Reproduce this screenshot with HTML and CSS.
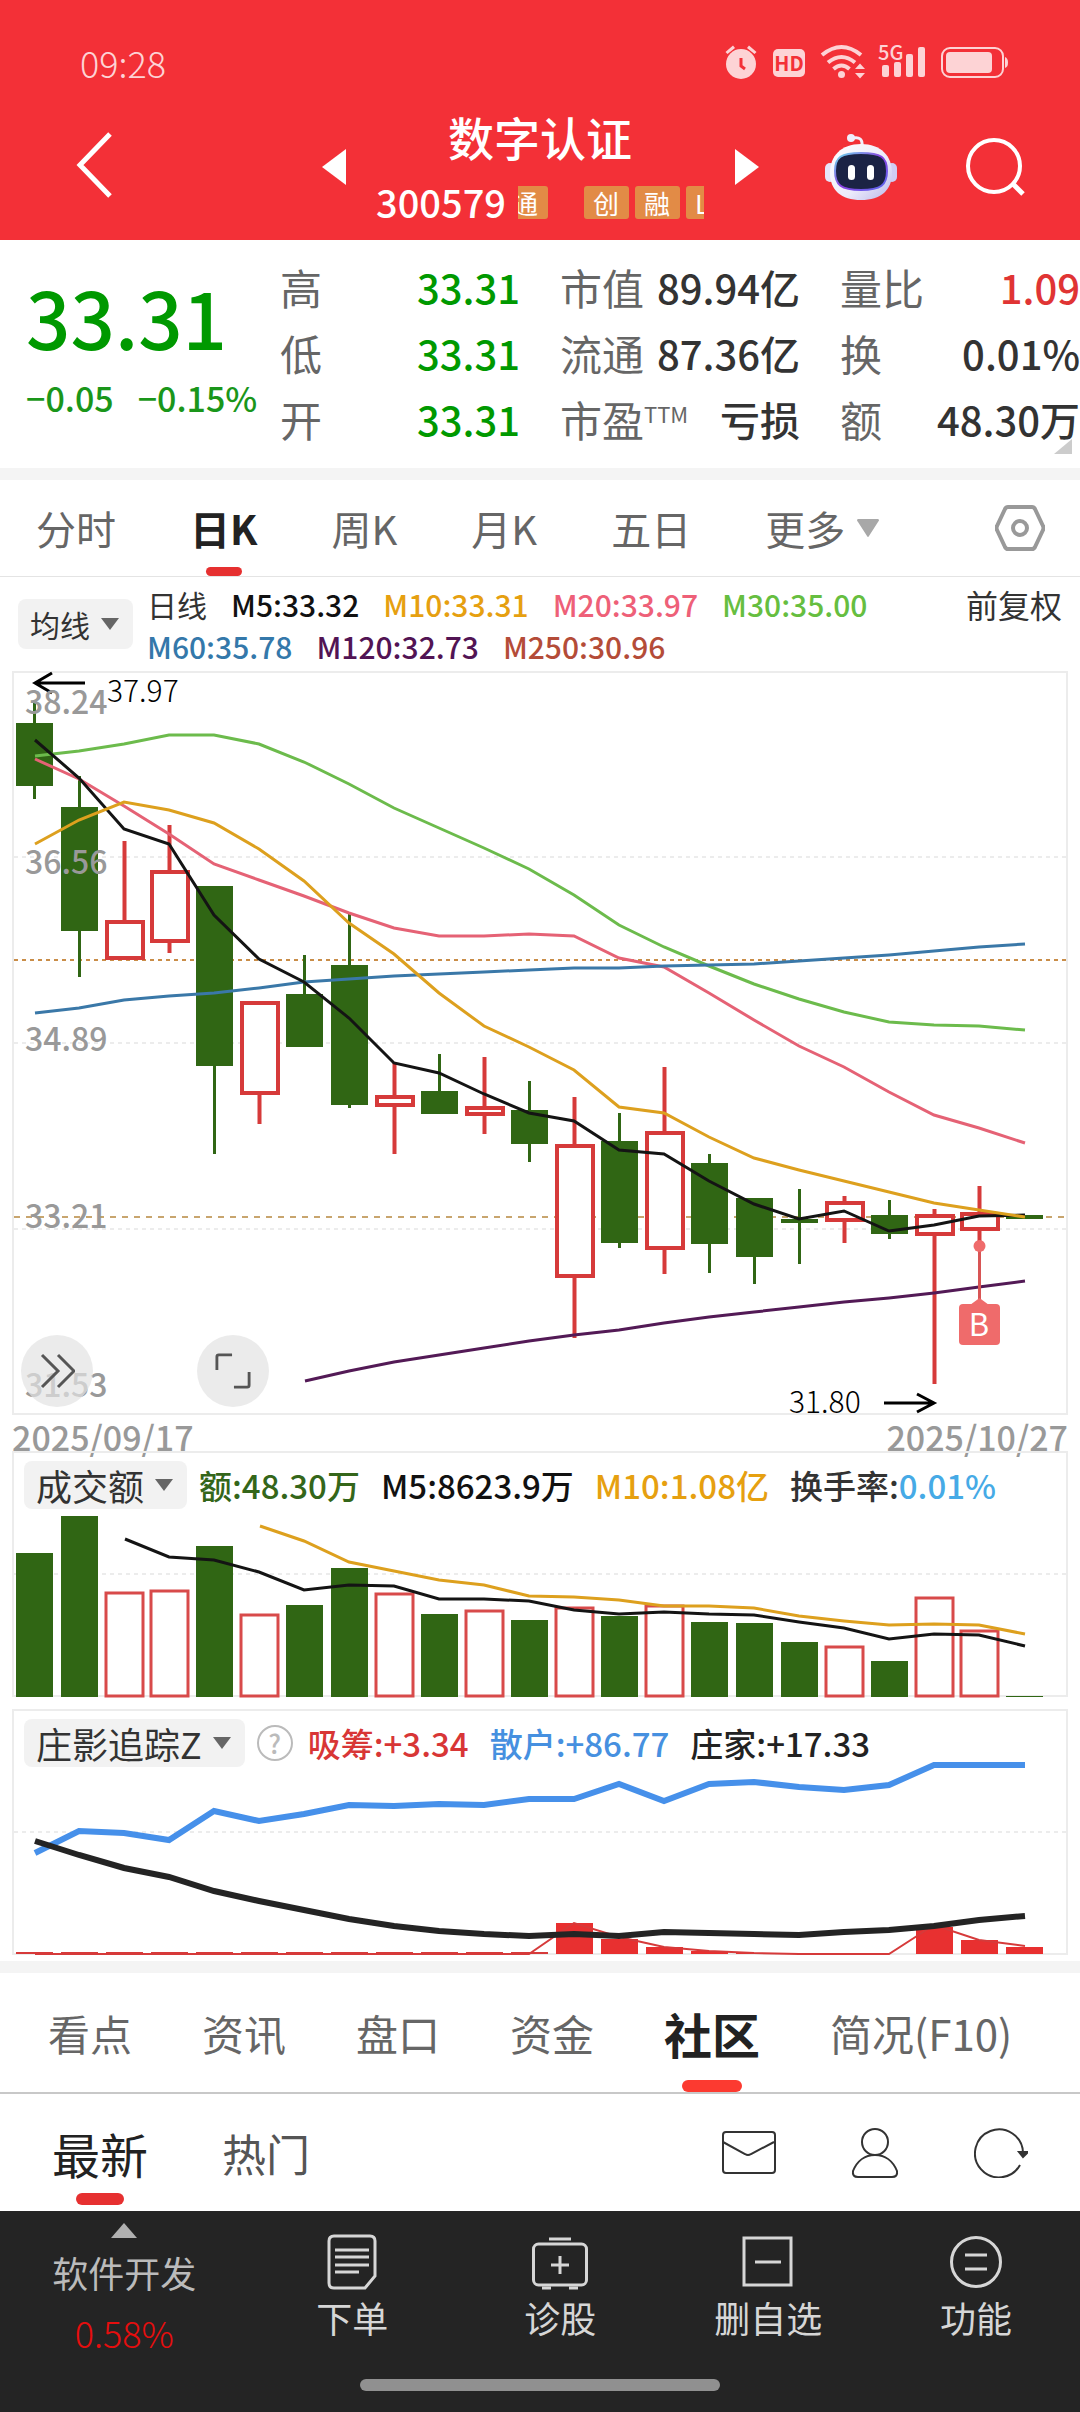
FILE: index.html
```html
<!DOCTYPE html>
<html lang="zh-CN">
<head>
<meta charset="utf-8">
<meta name="viewport" content="width=device-width, initial-scale=1">
<title>数字认证 300579</title>
<link rel="stylesheet" href="styles.css">
</head>
<body>
<header class="top">
  <div class="status">
    <time>09:28</time>
    <svg class="status-icons" viewBox="724 40 288 44" role="img" aria-label="闹钟 HD Wi-Fi 5G 电池">
      <g fill="#fdd3d5">
        <circle cx="741" cy="64" r="15"/>
        <path d="M725.500 52l7.500-6.500 2 2.500-7.500 6zM756.500 52l-7.500-6.500-2 2.500 7.500 6z"/>
        <rect x="773" y="49" width="32" height="28" rx="5"/>
        <circle cx="841.500" cy="74.500" r="3.500"/>
        <path d="M855 69l5-5.500 5 5.500zM855 73l5 5.500 5-5.500z"/>
        <rect x="882" y="65" width="7" height="12" rx="2"/>
        <rect x="894" y="62" width="7" height="15" rx="2"/>
        <rect x="906" y="54" width="7" height="23" rx="2"/>
        <rect x="918" y="47" width="7" height="30" rx="2"/>
        <rect x="946" y="52" width="46" height="21" rx="4"/>
        <path d="M1005 57q3 1 3 5.500t-3 5.500z"/>
      </g>
      <g fill="none" stroke="#fdd3d5" stroke-width="4">
        <path d="M822 55q19.500-16 39 0"/>
        <path d="M828 62.500q13.500-11 27 0"/>
        <path d="M833.500 69q8-7 16 0"/>
        <rect x="942" y="48" width="61" height="29" rx="8" stroke-width="2"/>
      </g>
      <path d="M741 58v8l4 3" fill="none" stroke="#f33037" stroke-width="3"/>
      <text class="hd-text" x="789" y="71" text-anchor="middle">HD</text>
      <text class="net-text" x="878" y="60">5G</text>
    </svg>
  </div>
  <nav class="title-bar" aria-label="个股">
    <div class="bar-left">
      <button class="icon-btn" aria-label="返回">
        <svg class="i-back" viewBox="0 0 36 66" fill="none" stroke="#fff" stroke-width="5"><path d="M34 2L4 33l30 31"/></svg>
      </button>
    </div>
    <div class="bar-center">
      <button class="icon-btn" aria-label="上一只"><svg class="i-step" viewBox="0 0 24 36" fill="#fff"><path d="M24 0v36L0 18z"/></svg></button>
      <div class="stock">
        <h1>数字认证</h1>
        <div class="stock-sub">
          <span class="code">300579</span>
          <div class="tags"><span class="tag tag-lead">通</span><span class="tag">创</span><span class="tag">融</span><span class="tag">L</span></div>
        </div>
      </div>
      <button class="icon-btn" aria-label="下一只"><svg class="i-step" viewBox="0 0 24 36" fill="#fff"><path d="M0 0v36l24-18z"/></svg></button>
    </div>
    <div class="bar-right">
      <button class="icon-btn" aria-label="智能助手">
        <svg class="i-bot" viewBox="0 0 72 66">
          <defs>
            <linearGradient id="shell" x1="0" y1="0" x2="1" y2="1"><stop offset="0" stop-color="#fff"/><stop offset=".6" stop-color="#ecebfb"/><stop offset="1" stop-color="#b9b6ea"/></linearGradient>
            <linearGradient id="rim" x1="0" y1="0" x2="1" y2="1"><stop offset="0" stop-color="#6fe0ee"/><stop offset=".5" stop-color="#8a3fe0"/><stop offset="1" stop-color="#5a6cf0"/></linearGradient>
          </defs>
          <path d="M28 4q10-2 9 8" fill="none" stroke="#f2f0fc" stroke-width="3"/>
          <circle cx="26" cy="4" r="4" fill="#efeefc"/>
          <rect x="0" y="29" width="10" height="19" rx="5" fill="#e6e4fa"/>
          <rect x="62" y="29" width="10" height="19" rx="5" fill="#d0cdf3"/>
          <path d="M36 10c20 0 31 12 31 29S56 66 36 66 5 56 5 39s11-29 31-29z" fill="url(#shell)"/>
          <path d="M36 19c20 0 26 4 26 18s-6 19-26 19S10 51 10 37s6-18 26-18z" fill="#1b2345" stroke="url(#rim)" stroke-width="2"/>
          <rect x="23" y="31" width="7" height="15" rx="3.500" fill="#fff"/><rect x="42" y="31" width="7" height="15" rx="3.500" fill="#fff"/>
        </svg>
      </button>
      <button class="icon-btn" aria-label="搜索">
        <svg class="i-search" viewBox="0 0 60 60" fill="none" stroke="#fff" stroke-width="4"><circle cx="29" cy="29" r="26"/><path d="M47 46l11 11" stroke-width="5"/></svg>
      </button>
    </div>
  </nav>
</header>

<main>
  <section class="quote" aria-label="行情">
    <div class="price-box">
      <strong class="price">33.31</strong>
      <div class="change"><span>−0.05</span><span>−0.15%</span></div>
    </div>
    <dl class="stats">
      <div><dt>高</dt><dd class="down">33.31</dd></div>
      <div><dt>低</dt><dd class="down">33.31</dd></div>
      <div><dt>开</dt><dd class="down">33.31</dd></div>
    </dl>
    <dl class="stats">
      <div><dt>市值</dt><dd>89.94亿</dd></div>
      <div><dt>流通</dt><dd>87.36亿</dd></div>
      <div><dt>市盈<sup>TTM</sup></dt><dd>亏损</dd></div>
    </dl>
    <dl class="stats">
      <div><dt>量比</dt><dd class="up">1.09</dd></div>
      <div><dt>换</dt><dd>0.01%</dd></div>
      <div><dt>额</dt><dd>48.30万</dd></div>
    </dl>
    <span class="expand"></span>
  </section>

  <nav class="period" aria-label="周期">
    <a href="#">分时</a>
    <a href="#" class="on">日K</a>
    <a href="#">周K</a>
    <a href="#">月K</a>
    <a href="#">五日</a>
    <a href="#" class="more">更多<svg class="i-caret-l" viewBox="0 0 22 18" fill="#a8a8a8"><path d="M1 0h20q2 1 0 3L12 17q-1 2-2 0L1 3Q-1 1 1 0z"/></svg></a>
    <button class="icon-btn gear" aria-label="设置">
      <svg class="i-gear" viewBox="0 0 50 46" fill="none" stroke="#999" stroke-width="4"><path d="M13 2h24q2 0 3 2l8 17q1 2 0 4l-8 17q-1 2-3 2H13q-2 0-3-2L2 25q-1-2 0-4l8-17q1-2 3-2z"/><circle cx="25" cy="23" r="7"/></svg>
    </button>
  </nav>

  <section class="ma-row" aria-label="均线">
    <button class="chip chip-s">均线<svg class="i-caret" viewBox="0 0 18 12" fill="#666"><path d="M0 0h18L9 12z"/></svg></button>
    <div class="ma-list">
      <span>日线</span><span class="c-5">M5:33.32</span><span class="c-10">M10:33.31</span><span class="c-20">M20:33.97</span><span class="c-30">M30:35.00</span>
      <span class="c-60">M60:35.78</span><span class="c-120">M120:32.73</span><span class="c-250">M250:30.96</span>
    </div>
    <button class="adjust">前复权</button>
  </section>

  <section class="panel kline" aria-label="日K线">
    <svg class="chart" viewBox="14 673 1052 740">
      <g class="grid"><path d="M14 857H1066M14 1043H1066M14 1229H1066"/></g>
      <path d="M14 960H1066" stroke="#c98d48" stroke-width="2" stroke-dasharray="4 4"/>
      <path d="M14 1217H1066" stroke="#c8a56e" stroke-width="2" stroke-dasharray="6 6"/>
      <path class="wick-g" d="M34.500 703V799M79.500 776V977M214.500 1000V1154M304.500 955V1000M349.500 913V1108M439.500 1054V1100M529.500 1081V1162M619.500 1113V1248M709.500 1154V1273M754.500 1200V1284M799.500 1189V1264M889.500 1200V1239"/>
      <path class="body-g" d="M16 723h37v63h-37zM61 807h37v124h-37zM196 886h37v180h-37zM286 994h37v53h-37zM331 965h37v140h-37zM421 1091h37v23h-37zM511 1110h37v34h-37zM601 1141h37v102h-37zM691 1163h37v81h-37zM736 1198h37v59h-37zM781 1219h37v4h-37zM871 1215h37v19h-37zM1006 1215h37v4h-37z"/>
      <path class="wick-r" d="M124.500 841V920M169.500 825V870M169.500 942V953M259.500 1094V1124M394.500 1063V1095M394.500 1106V1154M484.500 1057V1106M484.500 1115V1134M574.500 1097V1144M574.500 1277V1338M664.500 1067V1131M664.500 1249V1274M844.500 1196V1201M844.500 1221V1243M934.500 1209V1214M934.500 1235V1384M979.500 1186V1212M979.500 1230V1247"/>
      <path class="body-r" d="M107 922h36v36h-36zM152 872h36v69h-36zM242 1003h36v90h-36zM377 1097h36v8h-36zM467 1108h36v6h-36zM557 1146h36v130h-36zM647 1133h36v115h-36zM827 1203h36v17h-36zM917 1216h36v18h-36zM962 1214h36v15h-36z"/>
      <g class="ma-line">
        <polyline stroke="#6cbb4c" points="35,756 79,751 124,744 169,735 214,735 259,744 304,762 349,784 394,808 439,828 484,848 529,869 574,895 619,925 664,947 709,966 754,984 799,999 844,1012 889,1022 934,1025 979,1026 1025,1030"/>
        <polyline stroke="#e56275" points="35,759 79,779 124,806 169,834 214,864 259,880 304,896 349,913 394,928 439,936 484,936 529,934 574,936 619,958 664,967 709,993 754,1020 799,1046 844,1067 889,1092 934,1115 979,1128 1025,1143"/>
        <polyline stroke="#3a78a8" points="35,1013 79,1008 124,1000 169,996 214,993 259,988 304,982 349,979 394,976 439,974 484,972 529,970 574,968 619,968 664,966 709,965 754,964 799,961 844,958 889,955 934,951 979,947 1025,944"/>
        <polyline stroke="#531a56" points="305,1381 349,1371 394,1362 439,1355 484,1348 529,1341 574,1335 619,1330 664,1323 709,1317 754,1312 799,1307 844,1302 889,1298 934,1293 979,1287 1025,1281"/>
        <polyline stroke="#141414" points="35,740 79,778 124,829 169,844 214,915 259,959 304,982 349,1018 394,1063 439,1073 484,1094 529,1113 574,1121 619,1150 664,1154 709,1181 754,1204 799,1219 844,1211 889,1231 934,1225 979,1216 1025,1215"/>
        <polyline stroke="#dda01e" points="35,844 79,820 124,802 169,810 214,823 259,849 304,881 349,923 394,954 439,993 484,1026 529,1047 574,1070 619,1107 664,1113 709,1137 754,1158 799,1170 844,1181 889,1192 934,1203 979,1210 1025,1217"/>
      </g>
      <g class="arrow"><path d="M85 683H35M52 673L35 683l17 10"/><path d="M884 1403H934M917 1394l17 9-17 9"/></g>
      <path d="M979.500 1246V1300" stroke="#d85555" stroke-width="3"/>
      <circle cx="979.500" cy="1246" r="6" fill="#ef6b6b"/>
      <path d="M970 1305l9.500-7 9.500 7z" fill="#ef6b6b"/>
      <rect x="959" y="1304" width="41" height="41" rx="4" fill="#ef6b6b"/>
      <text class="mark" x="979" y="1336" text-anchor="middle">B</text>
      <g class="axis"><text x="25" y="714">38.24</text><text x="25" y="874">36.56</text><text x="25" y="1051">34.89</text><text x="25" y="1228">33.21</text><text x="25" y="1397">31.53</text></g>
      <g class="extreme"><text x="107" y="702">37.97</text><text x="789" y="1413">31.80</text></g>
    </svg>
    <div class="float-tools">
      <button class="round" aria-label="收起"><svg viewBox="0 0 36 36" fill="none" stroke="#555" stroke-width="3"><path d="M3 2l16 16L3 34M19 2l16 16-16 16"/></svg></button>
      <button class="round" aria-label="全屏"><svg viewBox="0 0 38 38" fill="none" stroke="#555" stroke-width="3"><path d="M2 18V4q0-2 2-2h14M36 20v14q0 2-2 2H20"/></svg></button>
    </div>
  </section>
  <div class="dates"><time>2025/09/17</time><time>2025/10/27</time></div>

  <section class="panel" aria-label="成交额">
    <div class="panel-head">
      <button class="chip">成交额<svg class="i-caret" viewBox="0 0 18 12" fill="#666"><path d="M0 0h18L9 12z"/></svg></button>
      <span class="c-vol">额:48.30万</span><span class="c-5">M5:8623.9万</span><span class="c-10">M10:1.08亿</span><span>换手率:<b class="c-rate">0.01%</b></span>
    </div>
    <svg class="chart" viewBox="14 1515 1052 180">
      <g class="grid"><path d="M14 1574H1066"/></g>
      <path class="body-g" d="M16 1553h37v144h-37zM61 1516h37v181h-37zM196 1546h37v151h-37zM286 1605h37v92h-37zM331 1568h37v129h-37zM421 1614h37v83h-37zM511 1620h37v77h-37zM601 1616h37v81h-37zM691 1622h37v75h-37zM736 1623h37v74h-37zM781 1642h37v55h-37zM871 1661h37v36h-37zM1006 1696h37v1h-37z"/>
      <path class="bar-r" d="M106 1593h37v103h-37zM151 1591h37v105h-37zM241 1615h37v81h-37zM376 1594h37v102h-37zM466 1611h37v85h-37zM556 1608h37v88h-37zM646 1606h37v90h-37zM826 1647h37v49h-37zM916 1598h37v98h-37zM961 1631h37v65h-37z"/>
      <g class="ma-line">
        <polyline stroke="#141414" points="125,1539 169,1557 214,1560 259,1572 304,1590 349,1585 394,1586 439,1599 484,1599 529,1601 574,1610 619,1614 664,1612 709,1614 754,1615 799,1622 844,1628 889,1639 934,1634 979,1635 1025,1646"/>
        <polyline stroke="#dda01e" points="260,1526 304,1541 349,1562 394,1571 439,1580 484,1585 529,1596 574,1597 619,1600 664,1606 709,1606 754,1608 799,1616 844,1621 889,1625 934,1624 979,1625 1025,1634"/>
      </g>
    </svg>
  </section>

  <section class="panel" aria-label="庄影追踪">
    <div class="panel-head">
      <button class="chip">庄影追踪Z<svg class="i-caret" viewBox="0 0 18 12" fill="#666"><path d="M0 0h18L9 12z"/></svg></button>
      <button class="help" aria-label="说明">?</button>
      <span class="c-red">吸筹:+3.34</span><span class="c-blue">散户:+86.77</span><span class="c-ink">庄家:+17.33</span>
    </div>
    <svg class="chart" viewBox="14 1773 1052 180">
      <g class="grid"><path d="M14 1832H1066"/></g>
      <path d="M16 1953H548" stroke="#d63a3a" stroke-width="2" stroke-dasharray="37 8"/>
      <path fill="#e83030" d="M556 1923h37v31h-37zM601 1939h37v15h-37zM646 1947h37v7h-37zM691 1951h37v3h-37zM736 1953h37v1h-37zM916 1927h37v27h-37zM961 1940h37v14h-37zM1006 1947h37v7h-37z"/>
      <polyline fill="none" stroke="#d63a3a" stroke-width="2" points="35,1954 529,1954 574,1923 619,1937 664,1947 709,1951 754,1953 799,1954 889,1954 934,1925 979,1940 1025,1946"/>
      <polyline fill="none" stroke="#4690ea" stroke-width="6" points="35,1853 79,1831 124,1833 169,1840 214,1811 259,1821 304,1814 349,1805 394,1806 439,1804 484,1805 529,1799 574,1799 619,1784 664,1801 709,1784 754,1782 799,1787 844,1790 889,1785 934,1765 1025,1765"/>
      <polyline fill="none" stroke="#242424" stroke-width="6" points="35,1841 79,1855 124,1868 169,1877 214,1891 259,1901 304,1910 349,1919 394,1926 439,1931 484,1934 529,1936 574,1934 619,1936 664,1932 709,1933 754,1934 799,1935 844,1932 889,1930 934,1926 979,1920 1025,1916"/>
    </svg>
  </section>

  <nav class="sections" aria-label="栏目">
    <a href="#">看点</a><a href="#">资讯</a><a href="#">盘口</a><a href="#">资金</a><a href="#" class="on">社区</a><a href="#">简况(F10)</a>
  </nav>

  <nav class="feed" aria-label="社区">
    <a href="#" class="on">最新</a><a href="#">热门</a>
    <div class="feed-tools">
      <button class="icon-btn" aria-label="消息"><svg class="i-feed" viewBox="0 0 54 50" fill="none" stroke="#333" stroke-width="2"><rect x="1" y="4" width="52" height="41" rx="3"/><path d="M1 14l22 12q3 2 6 0l23-12"/></svg></button>
      <button class="icon-btn" aria-label="我的"><svg class="i-feed" viewBox="0 0 54 50" fill="none" stroke="#333" stroke-width="2"><circle cx="27" cy="14" r="13"/><path d="M10 49q-6 0-5-6C9 33 17 27 27 27s18 6 22 16q1 6-5 6z"/></svg></button>
      <button class="icon-btn" aria-label="刷新"><svg class="i-feed" viewBox="0 0 54 50" fill="none" stroke="#333" stroke-width="2"><path d="M46 37A24 24 0 1 1 49 25"/><path d="M45 24h9l-5 5z" fill="#333"/></svg></button>
    </div>
  </nav>
</main>

<footer class="dock">
  <nav class="dock-row" aria-label="操作">
    <a href="#" class="sector">
      <svg class="i-up" viewBox="0 0 26 15" fill="#b0b0b0"><path d="M13 0l13 15H0z"/></svg>
      <span>软件开发</span><span class="pct">0.58%</span>
    </a>
    <a href="#" class="act"><svg class="i-dock" viewBox="0 0 56 56" fill="none" stroke="#d6d6d6" stroke-width="3"><path d="M10 2h36q5 0 5 5v35L41 54H10q-5 0-5-5V7q0-5 5-5z"/><path d="M11 16h34M11 23h34M11 31h34M11 38h24"/></svg><span>下单</span></a>
    <a href="#" class="act"><svg class="i-dock" viewBox="0 0 56 56" fill="none" stroke="#d6d6d6" stroke-width="3"><rect x="1.500" y="10" width="53" height="41" rx="5"/><path d="M17 5h22M10 54h9M37 54h9M28 22v18M19 31h18"/></svg><span>诊股</span></a>
    <a href="#" class="act"><svg class="i-dock" viewBox="0 0 56 56" fill="none" stroke="#d6d6d6" stroke-width="3"><rect x="4" y="4" width="47" height="47"/><path d="M15 28h26"/></svg><span>删自选</span></a>
    <a href="#" class="act"><svg class="i-dock" viewBox="0 0 56 56" fill="none" stroke="#d6d6d6" stroke-width="3"><circle cx="28" cy="28" r="24.500"/><path d="M17 21h22M17 35h22"/></svg><span>功能</span></a>
  </nav>
  <div class="home-bar"></div>
</footer>
</body>
</html>
```

FILE: styles.css
```css
* { box-sizing: border-box; margin: 0; padding: 0; }
body {
  background: #fff;
  color: #333;
  font-family: "Noto Sans CJK SC", "Noto Sans", sans-serif;
}
a { color: inherit; text-decoration: none; }
button { font: inherit; color: inherit; background: none; border: 0; }
svg { display: block; }
.icon-btn { flex: none; }

/* red header */
.top { background: #f33037; color: #fff; }
.status {
  display: flex;
  align-items: center;
  justify-content: space-between;
  padding: 40px 68px 0 80px;
  color: #fdd3d5;
  font-size: 36px;
  font-weight: 300;
  line-height: 44px;
}
.status-icons { width: 288px; height: 44px; overflow: visible; }
.hd-text { font-size: 20px; font-weight: 700; fill: #f33037; }
.net-text { font-size: 20px; font-weight: 500; fill: #fdd3d5; }
.title-bar {
  display: grid;
  grid-template-columns: 1fr 437px 1fr;
  align-items: center;
  padding: 20px 0 10px;
}
.bar-left { padding-left: 76px; }
.i-back { width: 36px; height: 66px; }
.bar-center { display: flex; justify-content: space-between; align-items: center; }
.i-step { width: 24px; height: 36px; }
.stock { text-align: center; }
.stock h1 { font-size: 46px; font-weight: 500; line-height: 64px; margin-bottom: 6px; }
.stock-sub { display: flex; align-items: center; gap: 12px; line-height: 56px; }
.code { font-size: 38px; font-weight: 500; }
.tags { display: flex; gap: 6px; width: 186px; overflow: hidden; }
.tag {
  flex: none;
  width: 45px;
  padding-left: 9px;
  border-radius: 3px;
  background: #e28b46;
  font-size: 26px;
  line-height: 33px;
  text-align: left;
}
.tag-lead { margin-left: -15px; margin-right: 30px; }
.bar-right { display: flex; align-items: center; gap: 68px; padding-left: 66px; }
.i-bot { width: 72px; height: 66px; overflow: visible; }
.i-search { width: 60px; height: 60px; }

/* quote summary */
.quote {
  position: relative;
  display: grid;
  grid-template-columns: 214px 1fr 1fr 1fr;
  column-gap: 40px;
  padding: 14px 0 16px 26px;
  border-bottom: 12px solid #f4f4f4;
}
.price-box { padding-top: 8px; color: #090; white-space: nowrap; }
.price { display: block; font-size: 78px; font-weight: 500; line-height: 108px; }
.change { display: flex; gap: 24px; font-size: 34px; font-weight: 500; line-height: 56px; color: #1a961a; }
.stats div { display: flex; justify-content: space-between; align-items: center; line-height: 66px; white-space: nowrap; }
.stats dt { font-size: 42px; color: #666; }
.stats dd { font-size: 40px; font-weight: 500; }
.stats sup { font-size: 22px; line-height: 22px; vertical-align: 14px; }
.stats .down { color: #090; }
.stats .up { color: #e03434; }
.expand {
  position: absolute;
  right: 8px;
  bottom: 14px;
  border-left: 18px solid transparent;
  border-bottom: 15px solid #ccc;
}

/* period tabs */
.period {
  display: flex;
  align-items: center;
  gap: 74px;
  height: 97px;
  padding: 0 35px 0 36px;
  border-bottom: 1px solid #e4e4e4;
  font-size: 40px;
  color: #666;
  white-space: nowrap;
}
.period a, .sections a, .feed a { position: relative; display: flex; align-items: center; height: 100%; }
.period .more { gap: 12px; }
.period .on { color: #222; font-weight: 700; }
.period .on::after, .sections .on::after, .feed .on::after {
  content: "";
  position: absolute;
  left: 50%;
  bottom: 0;
  width: 36px;
  height: 9px;
  border-radius: 5px;
  background: #e63030;
  transform: translateX(-50%);
}
.gear { margin-left: auto; }
.i-gear { width: 50px; height: 46px; }
.i-caret-l { width: 22px; height: 18px; }
.i-caret { width: 18px; height: 12px; flex: none; }

/* moving-average legend */
.ma-row {
  display: flex;
  align-items: flex-start;
  padding: 6px 18px 4px;
  font-size: 30px;
  line-height: 42px;
  white-space: nowrap;
}
.chip {
  display: flex;
  align-items: center;
  gap: 11px;
  height: 48px;
  padding: 0 14px 0 12px;
  border-radius: 8px;
  background: #f2f2f2;
  font-size: 36px;
  color: #333;
}
.chip-s { height: 50px; margin-top: 16px; margin-right: 14px; font-size: 30px; }
.ma-list { flex: 1; display: flex; flex-wrap: wrap; column-gap: 24px; font-weight: 500; }
.ma-list span:first-child { font-weight: 400; }
.adjust { font-size: 32px; line-height: 42px; margin-left: 70px; }
.c-5 { color: #111; }
.c-10 { color: #e6a010; }
.c-20 { color: #ee6078; }
.c-30 { color: #66be40; }
.c-60 { color: #3478aa; }
.c-120 { color: #521454; }
.c-250 { color: #b44c38; }
.c-vol { color: #34661a; }
.c-rate { color: #46aae6; font-weight: 500; }
.c-red { color: #d83636; }
.c-blue { color: #4690e0; }
.c-ink { color: #222; }

/* chart panels */
.panel { position: relative; margin: 0 12px 12px; border: 2px solid #ececec; }
.kline { margin-bottom: 0; }
.chart { width: 100%; height: auto; overflow: visible; }
.grid { fill: none; stroke: #ececec; stroke-width: 2; stroke-dasharray: 4 4; }
.wick-g { fill: none; stroke: #306614; stroke-width: 3; }
.body-g { fill: #306614; }
.wick-r { fill: none; stroke: #d63a3a; stroke-width: 4; }
.body-r { fill: #fff; stroke: #d63a3a; stroke-width: 4; }
.bar-r { fill: #fff; stroke: #d84a4a; stroke-width: 3; }
.ma-line { fill: none; stroke-width: 3; }
.arrow { fill: none; stroke: #000; stroke-width: 3; }
.axis { font-size: 32px; font-weight: 500; fill: #999; }
.extreme { font-size: 30px; font-weight: 300; fill: #000; }
.mark { font-size: 31px; fill: #fff; }
.float-tools { position: absolute; left: 7px; bottom: 6px; display: flex; gap: 104px; }
.round {
  width: 72px;
  height: 72px;
  padding: 18px;
  border-radius: 50%;
  background: rgba(226, 226, 226, .7);
}
.dates {
  display: flex;
  justify-content: space-between;
  height: 36px;
  padding: 0 12px;
  font-size: 34px;
  font-weight: 500;
  line-height: 44px;
  color: #999;
}
.panel-head {
  display: flex;
  align-items: center;
  gap: 21px;
  height: 62px;
  padding: 6px 10px 4px;
  font-size: 33px;
  font-weight: 500;
  white-space: nowrap;
}
.panel-head .chip { margin-right: -9px; font-weight: 400; }
.help {
  width: 36px;
  height: 36px;
  margin-right: -6px;
  border: 2px solid #bbb;
  border-radius: 50%;
  color: #bbb;
  font-size: 26px;
  line-height: 30px;
}

/* section tabs */
.sections {
  display: flex;
  gap: 70px;
  height: 133px;
  margin-top: -6px;
  padding: 0 48px;
  border-top: 12px solid #f4f4f4;
  border-bottom: 2px solid #c8c8c8;
  font-size: 42px;
  color: #666;
  white-space: nowrap;
}
.sections .on { color: #222; font-size: 48px; font-weight: 700; }
.sections .on::after { width: 60px; height: 12px; border-radius: 6px; background: #fc3a30; }

.feed {
  display: flex;
  align-items: center;
  gap: 74px;
  height: 117px;
  padding: 0 52px;
  font-size: 44px;
  color: #555;
}
.feed .on { color: #222; font-size: 48px; }
.feed .on::after { bottom: 6px; width: 48px; height: 12px; border-radius: 6px; }
.feed-tools { display: flex; gap: 72px; margin-left: auto; }
.i-feed { width: 54px; height: 50px; }

/* bottom dock */
.dock { background: #242424; color: #d6d6d6; padding-bottom: 21px; }
.dock-row { display: grid; grid-template-columns: 23% repeat(4, 1fr); font-size: 36px; }
.sector { display: flex; flex-direction: column; align-items: center; padding-top: 12px; line-height: 60px; color: #bbb; }
.sector span { margin-top: 4px; }
.sector .pct { margin-top: 0; color: #e60e0e; font-weight: 300; }
.i-up { width: 26px; height: 15px; }
.act { display: flex; flex-direction: column; align-items: center; padding-top: 23px; line-height: 54px; }
.i-dock { width: 56px; height: 56px; }
.home-bar { width: 360px; height: 12px; margin: 17px auto 0; border-radius: 6px; background: #909090; }
```
